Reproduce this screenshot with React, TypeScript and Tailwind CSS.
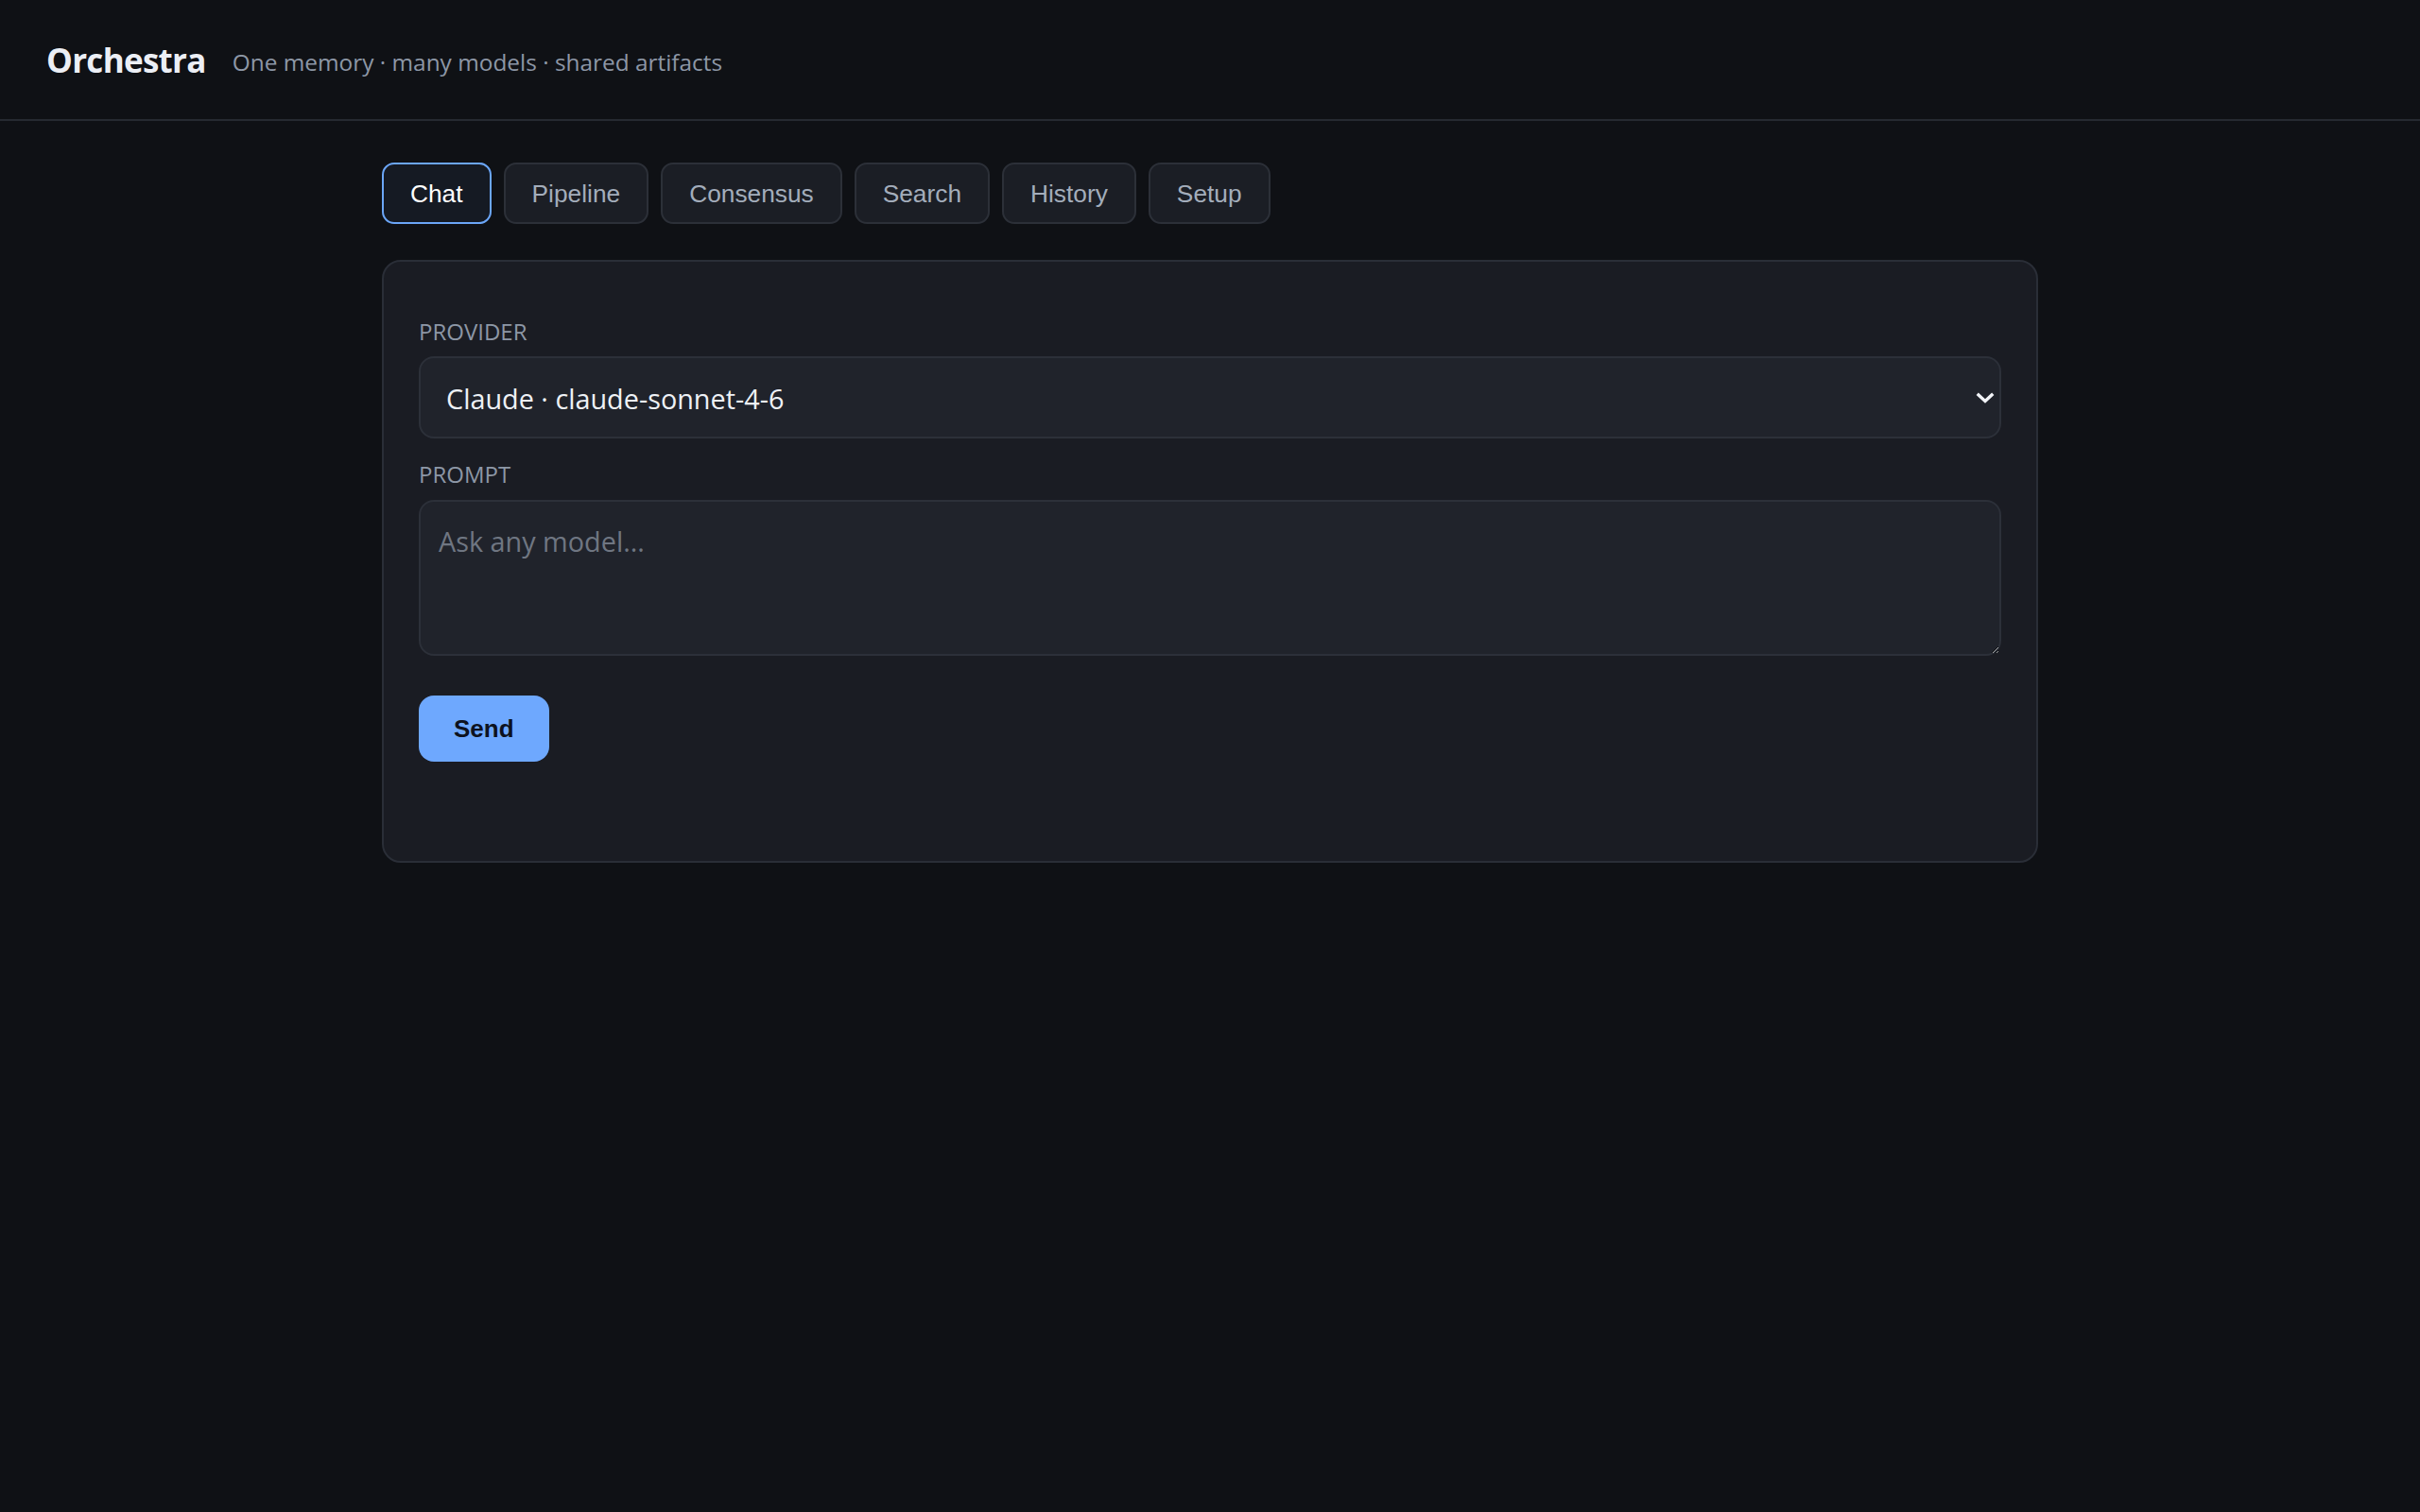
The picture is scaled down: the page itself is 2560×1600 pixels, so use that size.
import React, { useState } from 'react';

const TABS = ['Chat', 'Pipeline', 'Consensus', 'Search', 'History', 'Setup'];

const PROVIDERS = [
  'Claude · claude-sonnet-4-6',
  'OpenAI · gpt-4.1',
  'Gemini · gemini-2.5-pro',
];

const App: React.FC = () => {
  const [tab, setTab] = useState('Chat');
  const [provider, setProvider] = useState(PROVIDERS[0]);
  const [prompt, setPrompt] = useState('');

  return (
    <div className="min-h-screen bg-[#0f1115] font-['Open_Sans','Noto_Sans',sans-serif] text-[#e6e9ef]">
      <header className="flex h-[128px] items-center gap-[28px] border-b-2 border-[#262a31] pl-[49px]">
        <h1 className="pt-[2px] text-[35px] font-bold tracking-[-0.02em] text-[#eceff5]">Orchestra</h1>
        <span className="pt-[7px] text-[24.4px] text-[#8d97a6]">One memory · many models · shared artifacts</span>
      </header>

      <main className="mx-auto w-[1752px] pt-[44px]">
        <nav className="flex gap-[13px]">
          {TABS.map((t) => (
            <button
              key={t}
              onClick={() => setTab(t)}
              className={`rounded-[13px] border-2 px-[28px] py-[15.5px] font-['Liberation_Sans',Arial,sans-serif] text-[26.3px] leading-[30px] ${
                tab === t
                  ? 'border-[#6ba6f7] bg-[#151a23] text-white'
                  : 'border-[#2c3038] bg-[#1b1e25] text-[#a3adbb]'
              }`}
            >
              {t}
            </button>
          ))}
        </nav>

        <section className="mt-[38px] rounded-[20px] border-2 border-[#2a2e37] bg-[#1a1c23] px-[37px] pb-[105px] pt-[56px]">
          <label className="block text-[24px] leading-[36px] text-[#8d97a6]">PROVIDER</label>
          <div className="relative mt-[8px]">
            <select
              value={provider}
              onChange={(e) => setProvider(e.target.value)}
              className="h-[87px] w-full appearance-none rounded-[16px] border-2 border-[#2c3039] bg-[#20232b] px-[27px] pt-[2px] text-[28.8px] text-[#eef1f6] outline-none"
            >
              {PROVIDERS.map((p) => (
                <option key={p} value={p}>{p}</option>
              ))}
            </select>
            <svg
              className="pointer-events-none absolute right-[7px] top-1/2 -translate-y-1/2"
              width="20"
              height="14"
              viewBox="0 0 20 14"
              fill="none"
            >
              <path d="M3 4l7 6.5L17 4" stroke="#f2f4f8" strokeWidth="3.4" strokeLinecap="square" />
            </svg>
          </div>

          <label className="mt-[20px] block text-[24px] leading-[36px] text-[#8d97a6]">PROMPT</label>
          <textarea
            value={prompt}
            onChange={(e) => setPrompt(e.target.value)}
            placeholder="Ask any model..."
            className="mt-[9px] block h-[165px] w-full rounded-[16px] border-2 border-[#2c3039] bg-[#20232b] px-[19px] pt-[20px] text-[28.8px] leading-[1.5] text-[#eef1f6] outline-none [color-scheme:dark] placeholder:text-[#6f7682]"
          />

          <button className="mt-[42px] rounded-[16px] bg-[#6ea8fe] px-[37px] py-[20px] font-['Liberation_Sans',Arial,sans-serif] text-[26px] font-bold leading-[30px] text-[#0d1220]">
            Send
          </button>
        </section>
      </main>
    </div>
  );
};

export default App;
